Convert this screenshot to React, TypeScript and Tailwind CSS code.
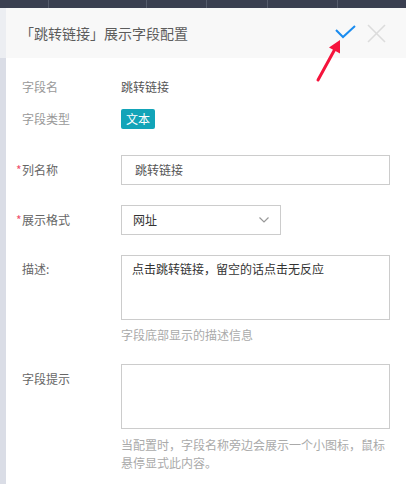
import React from "react";

const font = { fontFamily: '"Noto Sans CJK SC", "Noto Sans", sans-serif' };

function Label({ children, required }: { children: React.ReactNode; required?: boolean }) {
  return (
    <div className="relative w-[99px] shrink-0 text-[12px] text-[#666]">
      {required && <span className="absolute left-[-6px] top-0 text-[#f0506e]">*</span>}
      {children}
    </div>
  );
}

export default function App() {
  return (
    <div className="relative w-[406px] h-[484px] overflow-hidden bg-white" style={font}>
      {/* top dark nav strip */}
      <div className="flex h-[8px] bg-[#3a3f50]">
        <div className="w-[49px] border-r border-[#555b6b]" />
        <div className="w-[98px] border-r border-[#555b6b]" />
        <div className="w-[60px] border-r border-[#555b6b]" />
        <div className="w-[61px] border-r border-[#555b6b]" />
        <div className="w-[70px] border-r border-[#555b6b]" />
        <div className="flex-1" />
      </div>
      <div className="flex h-[476px]">
        {/* left strip */}
        <div className="flex w-[6px] flex-col">
          <div className="h-[50px] bg-[#eceef2]" />
          <div className="flex-1 bg-[#dadde6]" />
        </div>
        <div className="flex flex-1 flex-col">
          {/* header */}
          <div className="flex h-[50px] items-center bg-[#f8f8f8] pl-[14px] pr-[20px]">
            <div className="flex-1 text-[14px] text-[#5c5c5c]">「跳转链接」展示字段配置</div>
            <svg width="22" height="16" viewBox="0 0 22 16" className="mr-[10px]">
              <polyline points="1,5 8,12 20,1" fill="none" stroke="#1a8cf0" strokeWidth="2" />
            </svg>
            <svg width="19" height="19" viewBox="0 0 19 19">
              <line x1="1" y1="1" x2="18" y2="18" stroke="#dcdcdc" strokeWidth="1.6" />
              <line x1="18" y1="1" x2="1" y2="18" stroke="#dcdcdc" strokeWidth="1.6" />
            </svg>
          </div>
          {/* body */}
          <div className="flex flex-col pl-[16px] pr-[16px] pt-[13px] text-[12px]">
            <div className="flex h-[32px] items-center">
              <div className="w-[99px] shrink-0 text-[#999]">字段名</div>
              <div className="text-[#555]">跳转链接</div>
            </div>
            <div className="flex h-[32px] items-center">
              <div className="w-[99px] shrink-0 text-[#999]">字段类型</div>
              <div className="flex h-[20px] w-[34px] items-center justify-center rounded-[2px] bg-[#12a4b8] text-white">文本</div>
            </div>
            <div className="mt-[20px] flex items-center">
              <Label required>列名称</Label>
              <div className="flex h-[30px] flex-1 items-center border border-[#ccc] pl-[13px] text-[#555]">跳转链接</div>
            </div>
            <div className="mt-[20px] flex items-center">
              <Label required>展示格式</Label>
              <div className="flex h-[30px] w-[160px] items-center border border-[#ccc] pl-[11px] pr-[11px] text-[#333]">
                <span className="flex-1">网址</span>
                <svg width="10" height="6" viewBox="0 0 10 6">
                  <polyline points="0.5,0.5 5,5 9.5,0.5" fill="none" stroke="#999" strokeWidth="1.2" />
                </svg>
              </div>
            </div>
            <div className="mt-[20px] flex items-start">
              <div className="w-[99px] shrink-0 pt-[5px] leading-[18px] text-[#666]">描述:</div>
              <div className="flex flex-1 flex-col">
                <div className="h-[65px] border border-[#ccc] pl-[10px] pt-[3px] leading-[20px] text-[#333]">
                  点击跳转链接，留空的话点击无反应
                </div>
                <div className="mt-[6px] leading-[18px] text-[#aaa]">字段底部显示的描述信息</div>
              </div>
            </div>
            <div className="mt-[20px] flex items-start">
              <div className="w-[99px] shrink-0 pt-[6px] leading-[18px] text-[#666]">字段提示</div>
              <div className="flex flex-1 flex-col">
                <div className="h-[65px] border border-[#ccc]" />
                <div className="mt-[7px] leading-[18px] text-[#aaa]">
                  当配置时，字段名称旁边会展示一个小图标，鼠标悬停显式此内容。
                </div>
              </div>
            </div>
          </div>
        </div>
      </div>
      {/* red annotation arrow */}
      <svg className="absolute left-0 top-0" width="406" height="484" viewBox="0 0 406 484">
        <line x1="318" y1="80" x2="335" y2="49" stroke="#f5143c" strokeWidth="3" strokeLinecap="round" />
        <polygon points="340,40 329,47.5 340,53.5" fill="#f5143c" />
      </svg>
    </div>
  );
}
